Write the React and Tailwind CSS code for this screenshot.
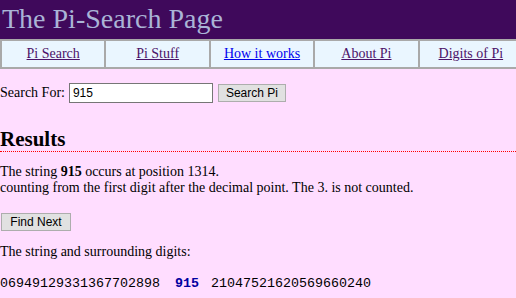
export default function App() {
  const links = [
    { t: "Pi Search", c: "text-[#4c1268]" },
    { t: "Pi Stuff", c: "text-[#4c1268]" },
    { t: "How it works", c: "text-[#0000ee]" },
    { t: "About Pi", c: "text-[#4c1268]" },
    { t: "Digits of Pi", c: "text-[#4c1268]" },
  ];
  return (
    <div className="w-[516px] h-[298px] overflow-hidden bg-[#ffddff] text-black [font-family:'Liberation_Serif','Times_New_Roman',serif] text-[14px] leading-[16px]">
      <div className="h-[39px] bg-[#3f095b] pl-[2px] pt-[3px]">
        <h1 className="text-[28px] leading-[32px] font-normal text-[#aab4d6]">The Pi-Search Page</h1>
      </div>
      <div className="w-[522px] flex border-y-2 border-[#a9a9a9] bg-[#eaf6ff] h-[30px]">
        {links.map((l, i) => (
          <div key={i} className="flex-1 border-l-2 border-[#a9a9a9] flex items-center justify-center">
            <a href="#" className={"underline " + l.c}>{l.t}</a>
          </div>
        ))}
      </div>
      <div className="mt-[14px] flex items-center h-[20px]">
        <span>Search For:</span>
        <div className="ml-[4px] w-[144px] h-[20px] border border-[#767676] bg-white flex items-center pl-[3px] [font-family:'Liberation_Sans',Arial,sans-serif] text-[12px]">915</div>
        <button className="ml-[5px] w-[68px] h-[18px] bg-[#e1e1e1] border border-[#adadad] [font-family:'Liberation_Sans',Arial,sans-serif] text-[12px] leading-[16px] text-black">Search Pi</button>
      </div>
      <h2 className="mt-[24px] text-[21px] leading-[24px] font-bold border-b border-dotted border-[#ff0000]">Results</h2>
      <p className="mt-[12px]">
        The string <b>915</b> occurs at position 1314.<br />
        counting from the first digit after the decimal point. The 3. is not counted.
      </p>
      <button className="mt-[17px] ml-[1px] block w-[70px] h-[18px] bg-[#e1e1e1] border border-[#adadad] [font-family:'Liberation_Sans',Arial,sans-serif] text-[12px] leading-[16px] text-black">Find Next</button>
      <p className="mt-[13px]">The string and surrounding digits:</p>
      <div className="mt-[16px] flex [font-family:'Liberation_Mono','Courier_New',monospace] text-[13.33px] leading-[16px]">
        <span>06949129331367702898</span>
        <span className="ml-[15px] font-bold text-[#0000a0]">915</span>
        <span className="ml-[12px]">21047521620569660240</span>
      </div>
    </div>
  );
}
